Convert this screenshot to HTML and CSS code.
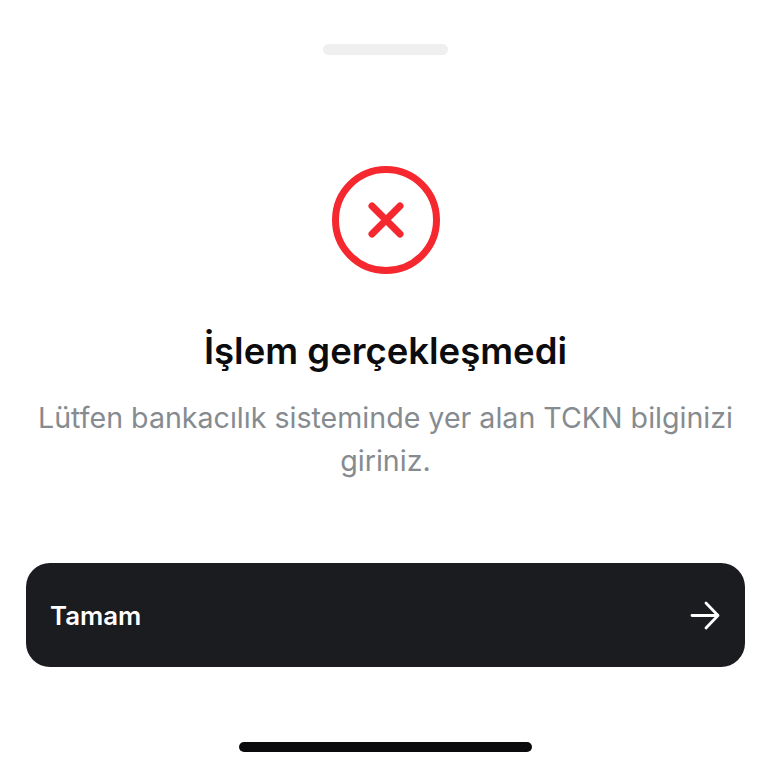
FILE: index.html
```html
<!DOCTYPE html>
<html lang="tr">
<head>
<meta charset="utf-8">
<title>İşlem gerçekleşmedi</title>
<link rel="stylesheet" href="styles.css">
</head>
<body>
<main class="sheet">
  <div class="handle"></div>
  <svg class="status-icon" width="108" height="108" viewBox="0 0 108 108" fill="none">
    <circle cx="54" cy="54" r="50.5" stroke="#f5282f" stroke-width="7"/>
    <path d="M40 40 68 68M68 40 40 68" stroke="#f5282f" stroke-width="7" stroke-linecap="round"/>
  </svg>
  <h1 class="title">İşlem gerçekleşmedi</h1>
  <p class="message">Lütfen bankacılık sisteminde yer alan TCKN bilginizi giriniz.</p>
  <button class="action" type="button">
    <span>Tamam</span>
    <svg width="32" height="30" viewBox="0 0 32 30" fill="none">
      <path d="M3 15.5H29M17 3 29 15.5 17 28" stroke="#fff" stroke-width="2.8" stroke-linecap="round" stroke-linejoin="round"/>
    </svg>
  </button>
  <div class="home-bar"></div>
</main>
</body>
</html>
```
FILE: styles.css
```css
* { box-sizing: border-box; }
html, body { margin: 0; height: 100%; background: #fff; overflow: hidden; }
.sheet {
  height: 768px;
  display: flex;
  flex-direction: column;
  align-items: center;
  padding-top: 44px;
  font-family: Inter, "Liberation Sans", sans-serif;
}
.handle { width: 125px; height: 11px; margin-left: 3px; border-radius: 6px; background: #efefef; }
.status-icon { display: block; margin-top: 111px; margin-left: 3px; }
.title {
  margin: 52px 0 0 3px;
  font-size: 36.5px;
  line-height: 50px;
  font-weight: 600;
  color: #0c0c0e;
  white-space: nowrap;
}
.message {
  width: 720px;
  margin: 20px 0 0 3px;
  font-size: 28.6px;
  line-height: 43px;
  font-weight: 400;
  text-align: center;
  color: #868b90;
}
.action {
  width: 719px;
  height: 104px;
  margin: 81px 0 0 3px;
  padding: 0 24px;
  display: flex;
  align-items: center;
  justify-content: space-between;
  border: 0;
  border-radius: 24px;
  background: #1b1c20;
  color: #fff;
  font: 600 25.8px Inter, "Liberation Sans", sans-serif;
}
.home-bar { width: 293px; height: 10px; margin: 75px 0 0 3px; border-radius: 5px; background: #0b0b0d; }
```
